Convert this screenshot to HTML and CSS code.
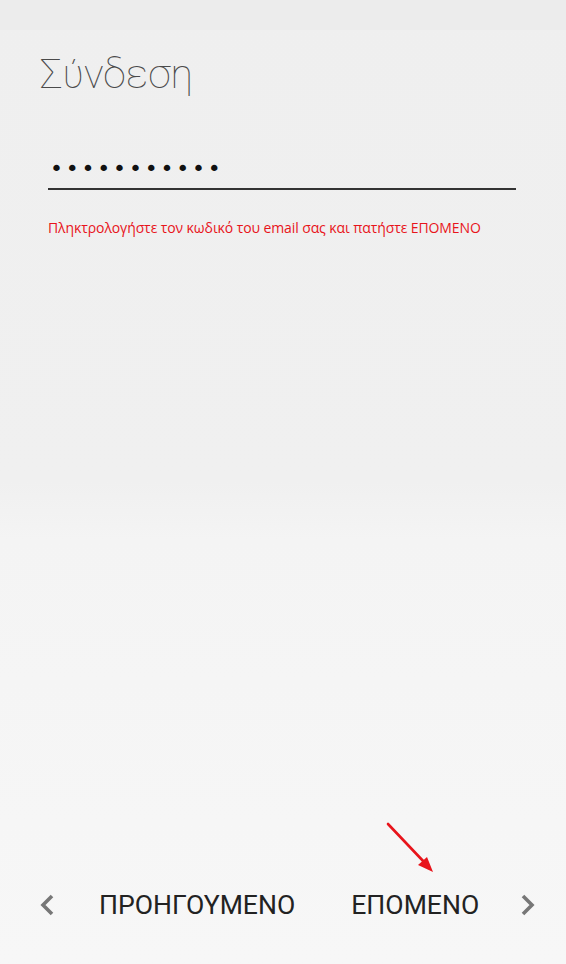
FILE: index.html
```html
<!DOCTYPE html>
<html lang="el">
<head>
<meta charset="utf-8">
<title>Σύνδεση</title>
<link rel="stylesheet" href="styles.css">
</head>
<body>
<div class="statusbar"></div>
<main class="content">
  <h1 class="title">Σύνδεση</h1>
  <div class="field"><span class="dots">•••••••••••</span></div>
  <p class="hint">Πληκτρολογήστε τον κωδικό του email σας και πατήστε ΕΠΟΜΕΝΟ</p>
</main>
<nav class="nav">
  <svg class="chev" width="16" height="22" viewBox="0 0 16 22"><path d="M13 2 L4 11 L13 20" fill="none" stroke="#777" stroke-width="3.6"/></svg>
  <span class="btn prev">ΠΡΟΗΓΟΥΜΕΝΟ</span>
  <span class="btn next">ΕΠΟΜΕΝΟ</span>
  <svg class="chev" width="16" height="22" viewBox="0 0 16 22"><path d="M3 2 L12 11 L3 20" fill="none" stroke="#777" stroke-width="3.6"/></svg>
</nav>
<svg class="pointer" width="56" height="60" viewBox="0 0 56 60">
  <line x1="3" y1="4" x2="40" y2="43" stroke="#e8141b" stroke-width="2.6" stroke-linecap="round"/>
  <polygon points="48,52 33,45 42,37" fill="#e8141b"/>
</svg>
</body>
</html>
```
FILE: styles.css
```css
html, body {
  margin: 0;
  padding: 0;
}
body {
  width: 566px;
  height: 964px;
  display: flex;
  flex-direction: column;
  position: relative;
  overflow: hidden;
  background: linear-gradient(to bottom, #efefef 0%, #f0f0f0 50%, #f4f4f4 56%, #f7f7f7 100%);
  font-family: Roboto, "Liberation Sans", sans-serif;
}
.statusbar {
  height: 30px;
  background: #ececec;
  flex: none;
}
.content {
  flex: 1;
  padding: 0 50px 0 48px;
}
.title {
  margin: 12px 0 0 -8px;
  font-weight: 100;
  font-size: 41px;
  line-height: 64px;
  color: #4a4a4a;
  letter-spacing: 0;
}
.field {
  margin-top: 52px;
  height: 32px;
  box-sizing: border-box;
  padding-bottom: 8px;
  border-bottom: 2px solid #333;
  display: flex;
  align-items: center;
}
.dots {
  font-family: "DejaVu Sans", sans-serif;
  font-size: 22px;
  letter-spacing: 2.8px;
  margin-left: 2px;
  color: #111;
  line-height: 1;
}
.hint {
  margin: 28px 0 0 0;
  font-family: "Open Sans", sans-serif;
  font-size: 14px;
  color: #e8141b;
  letter-spacing: -0.1px;
}
.nav {
  flex: none;
  height: 60px;
  margin-bottom: 29px;
  display: flex;
  align-items: center;
  padding-left: 39px;
}
.btn {
  font-size: 26.6px;
  color: #222;
  line-height: 1;
}
.prev {
  margin-left: 44px;
}
.next {
  margin-left: 56px;
}
.chev:last-child {
  margin-left: 41px;
}
.pointer {
  position: absolute;
  left: 385px;
  top: 820px;
}
```
